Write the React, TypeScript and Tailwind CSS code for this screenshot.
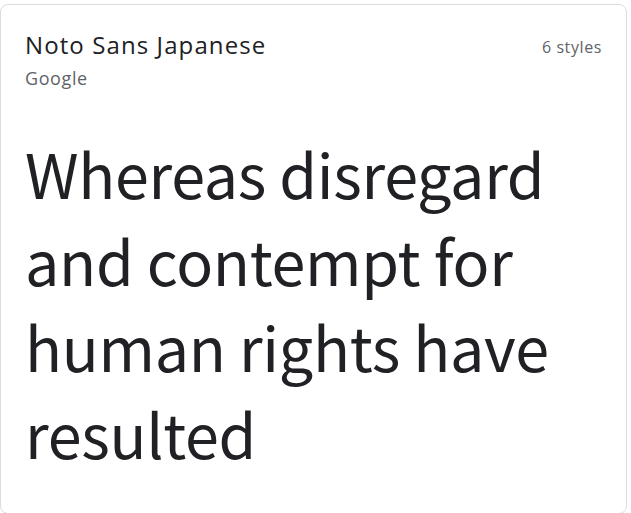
export default function App() {
  return (
    <div className="h-[513px] w-[631px] overflow-hidden bg-white pt-[4px]">
      <div className="h-[510px] w-[627px] rounded-[8px] border border-[#dadce0] px-6 pt-[24px]">
        <div className="flex items-start justify-between">
          <div>
            <h2 className="text-[24px] leading-[32px] tracking-[1.1px] text-[#202124] [font-family:'Open_Sans',sans-serif]">
              Noto Sans Japanese
            </h2>
            <p className="mt-[4px] text-[18px] leading-[26px] tracking-[0.6px] text-[#5f6368] [font-family:'Open_Sans',sans-serif]">
              Google
            </p>
          </div>
          <span className="pt-[6px] text-[16px] leading-[24px] tracking-[0.6px] text-[#5f6368] [font-family:'Open_Sans',sans-serif]">
            6 styles
          </span>
        </div>
        <p className="mt-[39px] text-[61px] leading-[86.7px] tracking-[-0.3px] text-[#202124] [font-family:'Noto_Sans_CJK_JP',sans-serif]">
          Whereas disregard and contempt for human rights have resulted
        </p>
      </div>
    </div>
  );
}
